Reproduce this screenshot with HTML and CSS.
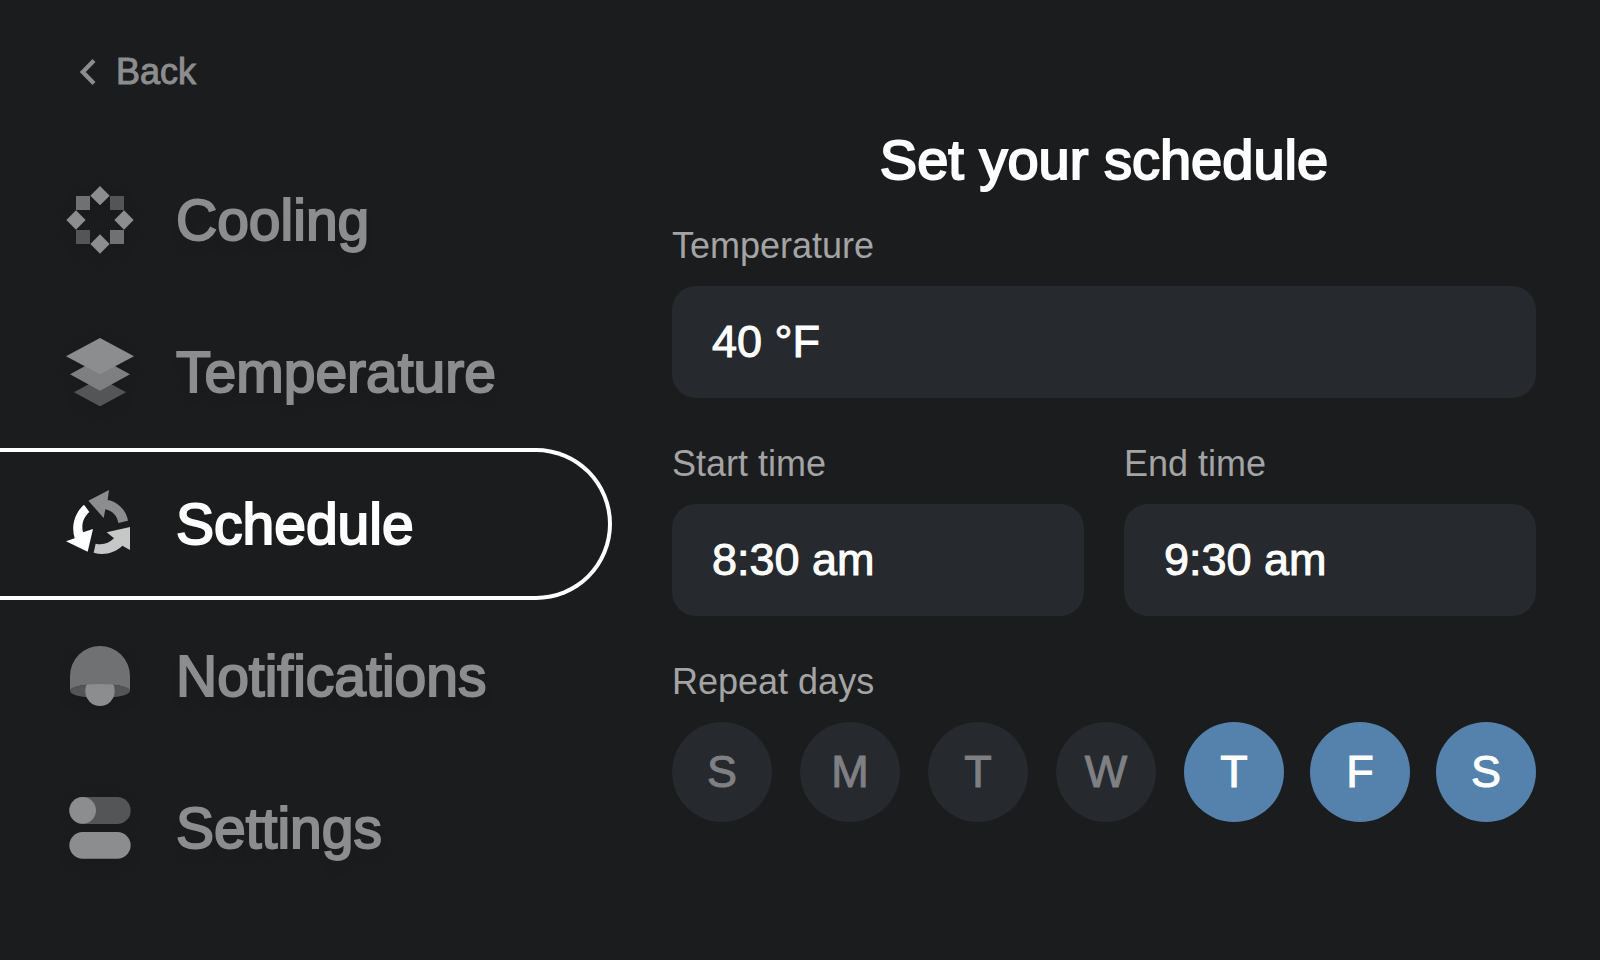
FILE: index.html
```html
<!DOCTYPE html>
<html lang="en">
<head>
<meta charset="utf-8">
<meta name="viewport" content="width=device-width, initial-scale=1">
<title>Set your schedule</title>
<link rel="stylesheet" href="styles.css">
</head>
<body>
<div class="screen">
  <aside class="sidebar">
    <button class="back" type="button">
      <svg class="back-icon" viewBox="0 0 16 26" aria-hidden="true"><path d="M14 1.5 2.8 13 14 24.5" fill="none" stroke="currentColor" stroke-width="4.2"/></svg>
      <span>Back</span>
    </button>
    <nav class="menu" aria-label="Main">
      <a class="menu-item" href="#cooling">
        <svg class="menu-icon" viewBox="48 468 204 204" aria-hidden="true">
          <path d="M150 468l29 29-29 29-29-29zM222 541l29 29-29 29-29-29zM150 613l29 29-29 29-29-29zM78 541l29 29-29 29-29-29z" fill="#8c8d8f"/>
          <path d="M78 498h42v42H78zM180 600h42v42h-42z" fill="#707173"/>
          <path d="M180 498h42v42h-42zM78 600h42v42H78z" fill="#545557"/>
        </svg>
        <span>Cooling</span>
      </a>
      <a class="menu-item" href="#temperature">
        <svg class="menu-icon" viewBox="48 54 204 204" aria-hidden="true">
          <path d="M150 174l78 43-78 42-78-42z" fill="#545557"/>
          <path d="M150 114l90 49-90 49-90-49z" fill="#7e7f81"/>
          <path d="M150 54l102 55-102 54L48 109z" fill="#8c8d8f"/>
        </svg>
        <span>Temperature</span>
      </a>
      <a class="menu-item is-active" href="#schedule" aria-current="page">
        <svg class="menu-icon" viewBox="48 60 204 204" aria-hidden="true">
          <path d="M177 60 173 90C204 96 229 121 234 152L205 159C202 138 187 122 166 118L161 144 115 92Z" fill="#8c8d8f"/>
          <path d="M102 104 118 126C101 141 93 163 99 187L129 177 113 245 48 214 74 205C63 169 73 130 102 104Z" fill="#fff"/>
          <path d="M240 171V240L217 227C194 249 163 257 131 248L137 221C158 226 177 220 192 205L170 187Z" fill="#c6c7c7"/>
        </svg>
        <span>Schedule</span>
      </a>
      <a class="menu-item" href="#notifications">
        <svg class="menu-icon" viewBox="48 51 204 204" aria-hidden="true">
          <ellipse cx="150" cy="198" rx="90" ry="21" fill="#545557"/>
          <path d="M60 198V153a90 90 0 0 1 180 0v45C240 186 200 177 150 177S60 186 60 198Z" fill="#707173"/>
          <path d="M110 178Q150 176 190 178C193 184 194 192 194 199a44 44 0 0 1-88 0C106 192 107 184 110 178Z" fill="#8c8d8f"/>
        </svg>
        <span>Notifications</span>
      </a>
      <a class="menu-item" href="#settings">
        <svg class="menu-icon" viewBox="48 507 204 204" aria-hidden="true">
          <rect x="58" y="516" width="184" height="81" rx="40" fill="#545557"/>
          <circle cx="98" cy="556" r="40" fill="#8c8d8f"/>
          <rect x="58" y="621" width="184" height="80" rx="40" fill="#8c8d8f"/>
        </svg>
        <span>Settings</span>
      </a>
    </nav>
  </aside>
  <main class="content">
    <h1 class="title">Set your schedule</h1>
    <form class="form">
      <div class="field">
        <label class="label" for="temperature">Temperature</label>
        <input class="input" id="temperature" type="text" value="40 °F">
      </div>
      <div class="field-row">
        <div class="field">
          <label class="label" for="start">Start time</label>
          <input class="input" id="start" type="text" value="8:30 am">
        </div>
        <div class="field">
          <label class="label" for="end">End time</label>
          <input class="input" id="end" type="text" value="9:30 am">
        </div>
      </div>
      <div class="field" role="group" aria-labelledby="days-label">
        <span class="label" id="days-label">Repeat days</span>
        <div class="days">
          <button class="day" type="button" aria-pressed="false">S</button>
          <button class="day" type="button" aria-pressed="false">M</button>
          <button class="day" type="button" aria-pressed="false">T</button>
          <button class="day" type="button" aria-pressed="false">W</button>
          <button class="day is-on" type="button" aria-pressed="true">T</button>
          <button class="day is-on" type="button" aria-pressed="true">F</button>
          <button class="day is-on" type="button" aria-pressed="true">S</button>
        </div>
      </div>
    </form>
  </main>
</div>
</body>
</html>
```
FILE: styles.css
```css
* {
  box-sizing: border-box;
}

body {
  margin: 0;
  background: #1b1c1e;
  color: #fff;
  font-family: "Liberation Sans", Arial, sans-serif;
}

button,
input {
  font: inherit;
}

.screen {
  display: grid;
  grid-template-columns: minmax(0, 612fr) minmax(0, 988fr);
  min-height: 100vh;
}

.back {
  display: flex;
  align-items: center;
  gap: 20px;
  margin: 48px 0 48px 80px;
  padding: 0;
  border: 0;
  background: none;
  color: #8c8d8f;
  font-size: 36px;
  line-height: 48px;
  -webkit-text-stroke: 1px currentColor;
  cursor: pointer;
}

.back-icon {
  width: 16px;
  height: 26px;
}

.menu {
  display: flex;
  flex-direction: column;
}

.menu-item {
  display: flex;
  align-items: center;
  gap: 42px;
  height: 152px;
  padding-left: 66px;
  border: 4px solid transparent;
  border-left: 0;
  border-radius: 0 76px 76px 0;
  color: #8c8d8f;
  font-size: 57px;
  line-height: 64px;
  -webkit-text-stroke: 2px currentColor;
  text-decoration: none;
  text-shadow: 0 8px 12px rgba(0, 0, 0, 0.06);
}

.menu-icon {
  flex: none;
  width: 68px;
  height: 68px;
  filter: drop-shadow(0 4px 6px rgba(0, 0, 0, 0.1));
}

.menu-item.is-active {
  border-color: #fff;
  color: #fff;
  text-shadow: none;
}

.menu-item.is-active .menu-icon {
  filter: none;
}

.content {
  padding: 128px 64px 64px 60px;
}

.title {
  margin: 0 0 32px;
  font-size: 56px;
  font-weight: 400;
  line-height: 64px;
  -webkit-text-stroke: 2px currentColor;
  text-align: center;
}

.form {
  display: flex;
  flex-direction: column;
  gap: 44px;
}

.field {
  display: flex;
  flex-direction: column;
  gap: 18px;
}

.field-row {
  display: grid;
  grid-template-columns: 1fr 1fr;
  gap: 40px;
}

.label {
  color: #a4a4a5;
  font-size: 36px;
  line-height: 44px;
}

.input {
  width: 100%;
  height: 112px;
  padding: 0 40px;
  border: 0;
  border-radius: 24px;
  background: #26292e;
  color: #fff;
  font-size: 45px;
  -webkit-text-stroke: 1px currentColor;
}

.days {
  display: flex;
  justify-content: space-between;
}

.day {
  width: 100px;
  height: 100px;
  padding: 0;
  border: 0;
  border-radius: 50%;
  background: #26292e;
  color: #7f8083;
  font-size: 45px;
  -webkit-text-stroke: 1px currentColor;
  cursor: pointer;
}

.day.is-on {
  background: #5482ad;
  color: #fff;
}

.day.is-on + .day.is-on {
  margin-left: -2px;
}
```
